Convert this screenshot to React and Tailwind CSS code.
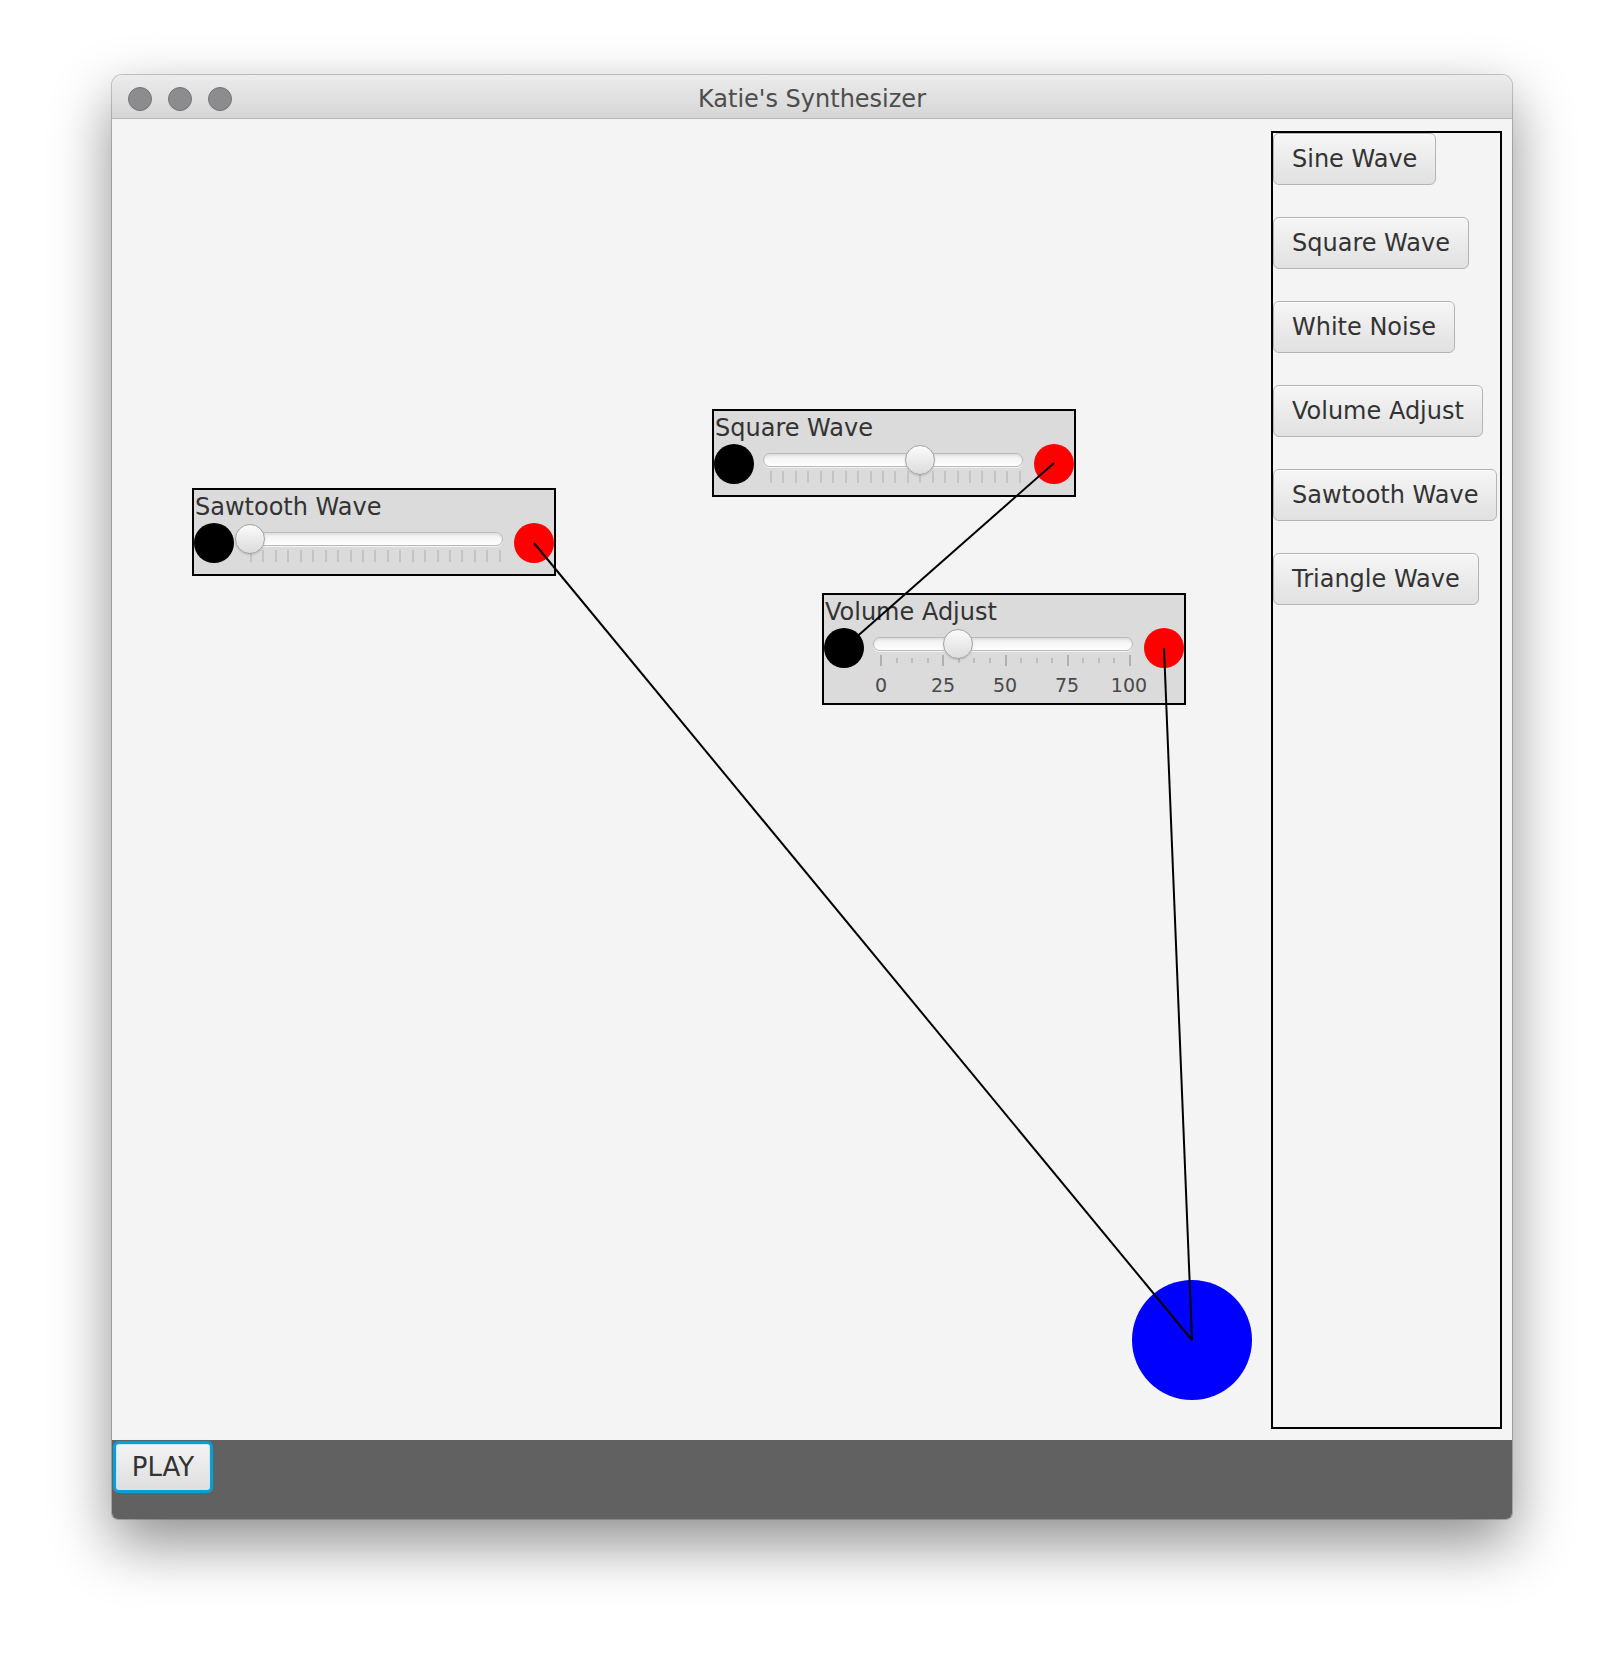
const font = { fontFamily: '"DejaVu Sans", "Liberation Sans", sans-serif' };

const modules = [
  { name: "Sawtooth Wave", x: 80, y: 369, value: 0 },
  { name: "Square Wave", x: 600, y: 290, value: 0.6 },
  { name: "Volume Adjust", x: 710, y: 474, value: 0.31, labels: true },
];

const wires = [
  [422, 424, 1080, 1221],
  [942, 344, 732, 529],
  [1052, 529, 1080, 1221],
];

const palette = ["Sine Wave", "Square Wave", "White Noise", "Volume Adjust", "Sawtooth Wave", "Triangle Wave"];

function Slider({ value, labels }) {
  const ticks = labels ? 17 : 21;
  return (
    <div className="w-[268px] ml-[1px]">
      <div className="relative h-[32px] flex items-center">
        <div className="ml-[8px] h-[14px] flex-1 rounded-full border border-[#b9b9b9] bg-gradient-to-b from-[#eeeeee] to-white shadow-[inset_0_2px_2px_rgba(0,0,0,0.06),0_1px_0_rgba(255,255,255,0.7)]" />
        <div
          className="absolute top-[1px] w-[30px] h-[30px] rounded-full border-[1.5px] border-[#a4a4a4] bg-gradient-to-b from-[#fbfbfb] to-[#dcdcdc] shadow-[0_1px_2px_rgba(0,0,0,0.15)]"
          style={{ left: value * 250 }}
        />
      </div>
      <div className="mt-[-5px] ml-[15px] w-[251px] flex justify-between items-start">
        {Array.from({ length: ticks }).map((_, i) =>
          labels ? (
            i % 4 === 0 ? (
              <div key={i} className="w-[2px] h-[11px] bg-[#b0b0b0]" />
            ) : (
              <div key={i} className="w-[2px] h-[5px] mt-[3px] bg-[#bcbcbc]" />
            )
          ) : (
            <div key={i} className="w-[2px] h-[12px] bg-[#c4c4c4]" />
          )
        )}
      </div>
      {labels && (
        <div className="mt-[8px] ml-[-15px] flex text-[19px] leading-[22px] text-[#4a4a4a]">
          {["0", "25", "50", "75", "100"].map((l) => (
            <div key={l} className="w-[62px] shrink-0 text-center">{l}</div>
          ))}
        </div>
      )}
    </div>
  );
}

function Module({ name, x, y, value, labels }) {
  return (
    <div
      className={`absolute w-[364px] border-2 border-black bg-[#dbdbdb] ${labels ? "h-[112px]" : "h-[88px]"}`}
      style={{ left: x, top: y }}
    >
      <div className="pt-[3px] pl-[1px] text-[24px] leading-[28px] text-[#333333]">{name}</div>
      <div className="mt-[2px] flex items-start">
        <div className="w-[40px] h-[40px] rounded-full bg-black shrink-0" />
        <Slider value={value} labels={labels} />
        <div className="ml-[11px] w-[40px] h-[40px] rounded-full bg-[#ff0000] shrink-0" />
      </div>
    </div>
  );
}

export default function App() {
  return (
    <div className="w-[1624px] h-[1668px] bg-white pt-[75px]" style={font}>
      <div className="mx-auto w-[1400px] h-[1444px] flex flex-col rounded-t-[10px] rounded-b-[6px] overflow-hidden shadow-[0_24px_60px_rgba(0,0,0,0.45),0_0_0_1px_rgba(0,0,0,0.2)]">
        <div className="relative h-[44px] shrink-0 flex items-center justify-center bg-gradient-to-b from-[#ececec] to-[#d6d6d6] border-b border-[#b8b8b8]">
          <div className="absolute left-[16px] top-[12px] flex gap-[16px]">
            <div className="w-[24px] h-[24px] rounded-full bg-[#8c8c8e] border border-[#747476]" />
            <div className="w-[24px] h-[24px] rounded-full bg-[#8c8c8e] border border-[#747476]" />
            <div className="w-[24px] h-[24px] rounded-full bg-[#8c8c8e] border border-[#747476]" />
          </div>
          <span className="pt-[5px] text-[24px] text-[#4d4d4d]">Katie's Synthesizer</span>
        </div>

        <div className="h-[1321px] flex bg-[#f4f4f4]">
          <div className="relative flex-1">
            {modules.map((m) => (
              <Module key={m.name} {...m} />
            ))}
            <div className="absolute left-[1020px] top-[1161px] w-[120px] h-[120px] rounded-full bg-[#0000ff]" />
            <svg className="absolute inset-0 w-full h-full pointer-events-none">
              {wires.map(([x1, y1, x2, y2], i) => (
                <line key={i} x1={x1} y1={y1} x2={x2} y2={y2} stroke="black" strokeWidth="2" />
              ))}
            </svg>
          </div>
          <div className="w-[231px] mt-[12px] mb-[11px] mr-[10px] border-2 border-black flex flex-col items-start gap-[32px]">
            {palette.map((p) => (
              <button
                key={p}
                className="h-[52px] px-[18px] rounded-[6px] border border-[#b4b4b4] bg-gradient-to-b from-[#f6f6f6] to-[#e1e1e1] shadow-[inset_0_1px_0_rgba(255,255,255,0.8)] text-[24px] leading-[28px] text-[#333333] whitespace-nowrap"
              >
                {p}
              </button>
            ))}
          </div>
        </div>

        <div className="flex-1 bg-[#616161]">
          <button className="mt-[1px] ml-[1px] w-[100px] h-[52px] rounded-[6px] border-[3px] border-[#06a0d8] bg-gradient-to-b from-[#f4f4f4] to-[#dedede] shadow-[inset_0_0_0_1px_#cfe6f0,0_0_2px_rgba(6,160,216,0.4)] text-[26px] leading-[30px] text-[#333333]">
            PLAY
          </button>
        </div>
      </div>
    </div>
  );
}
